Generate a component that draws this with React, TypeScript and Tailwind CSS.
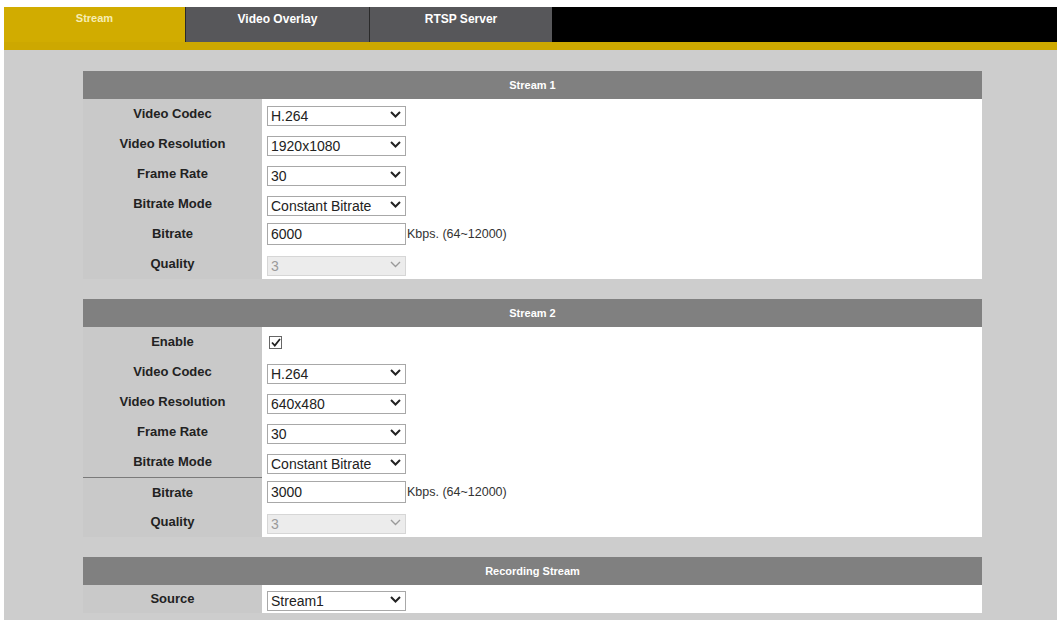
import React from 'react';

const font = { fontFamily: '"Liberation Sans", Arial, sans-serif' };

const Chevron: React.FC<{ muted?: boolean }> = ({ muted }) => (
  <svg
    width="11"
    height="7"
    viewBox="0 0 11 7"
    className="pointer-events-none absolute right-[5px] top-[7px]"
  >
    <polyline
      points="1,1 5.5,5.5 10,1"
      fill="none"
      stroke={muted ? '#9a9a9a' : '#222'}
      strokeWidth={muted ? 1.4 : 2}
    />
  </svg>
);

const Select: React.FC<{ value: string; options: string[]; disabled?: boolean }> = ({
  value,
  options,
  disabled,
}) => (
  <div className="relative w-[139px] h-[20px]">
    <select
      defaultValue={value}
      disabled={disabled}
      className={
        disabled
          ? 'appearance-none w-full h-full border border-[#d6d6d6] bg-[#ececec] text-[#9a9a9a] text-[14px] leading-none pl-[3px] outline-none'
          : 'appearance-none w-full h-full border border-[#a8a8a8] bg-white text-[#222] text-[14px] leading-none pl-[3px] outline-none'
      }
    >
      {options.map((o) => (
        <option key={o}>{o}</option>
      ))}
    </select>
    <Chevron muted={disabled} />
  </div>
);

const Bitrate: React.FC<{ value: string }> = ({ value }) => (
  <div className="flex items-center">
    <input
      defaultValue={value}
      className="w-[139px] h-[22px] border border-[#a8a8a8] bg-white text-[14px] text-[#222] pl-[3px] outline-none"
    />
    <span className="text-[12.5px] text-[#333] ml-[1px]">Kbps. (64~12000)</span>
  </div>
);

const Row: React.FC<{ label: string; h?: string; line?: boolean; children: React.ReactNode }> = ({
  label,
  h = 'h-[30px]',
  line,
  children,
}) => (
  <div className={`flex ${h}`}>
    <div
      className={`w-[179px] shrink-0 bg-[#c9c9c9] flex items-center justify-center text-[13px] font-bold text-[#222] ${
        line ? 'border-t border-[#7a7a7a]' : ''
      }`}
    >
      {label}
    </div>
    <div className="flex-1 bg-white flex items-center pl-[5px]">{children}</div>
  </div>
);

const Header: React.FC<{ title: string }> = ({ title }) => (
  <div className="h-[28px] bg-[#808080] flex items-center justify-center text-white text-[11px] font-bold">
    {title}
  </div>
);

const codecs = ['H.264', 'H.265', 'MJPEG'];
const modes = ['Constant Bitrate', 'Variable Bitrate'];
const rates = ['30', '25', '15', '10', '5'];

export default function App() {
  return (
    <div className="min-h-[628px] bg-white pt-[7px] pl-[4px]" style={font}>
      <div className="w-[1053px] h-[613px] bg-[#cdcdcd]">
        {/* Tabs */}
        <div className="flex h-[35px] bg-black">
          <div className="w-[181px] bg-[#d1ac00] text-[#f6eeb4] text-[11px] font-bold text-center pt-[3px]">
            Stream
          </div>
          <div className="w-[184px] bg-[#57575a] border-l border-[#2a2a2a] text-white text-[12px] font-bold text-center pt-[3px]">
            Video Overlay
          </div>
          <div className="w-[183px] bg-[#57575a] border-l border-[#2a2a2a] text-white text-[12px] font-bold text-center pt-[3px]">
            RTSP Server
          </div>
        </div>
        <div className="h-[8px] bg-[#cda800]" />

        <div className="pt-[21px] pl-[79px] flex flex-col gap-[20px]">
          <div className="w-[899px]">
            <Header title="Stream 1" />
            <Row label="Video Codec">
              <Select value="H.264" options={codecs} />
            </Row>
            <Row label="Video Resolution">
              <Select value="1920x1080" options={['1920x1080', '1280x720', '640x480']} />
            </Row>
            <Row label="Frame Rate">
              <Select value="30" options={rates} />
            </Row>
            <Row label="Bitrate Mode">
              <Select value="Constant Bitrate" options={modes} />
            </Row>
            <Row label="Bitrate">
              <Bitrate value="6000" />
            </Row>
            <Row label="Quality">
              <Select value="3" options={['1', '2', '3', '4', '5']} disabled />
            </Row>
          </div>

          <div className="w-[899px]">
            <Header title="Stream 2" />
            <Row label="Enable">
              <div className="ml-[2px] w-[13px] h-[13px] border border-[#666] bg-white flex items-center justify-center">
                <svg width="10" height="9" viewBox="0 0 10 9">
                  <polyline points="1,4.5 3.8,7.5 9,1" fill="none" stroke="#222" strokeWidth="1.8" />
                </svg>
              </div>
            </Row>
            <Row label="Video Codec">
              <Select value="H.264" options={codecs} />
            </Row>
            <Row label="Video Resolution">
              <Select value="640x480" options={['640x480', '320x240']} />
            </Row>
            <Row label="Frame Rate">
              <Select value="30" options={rates} />
            </Row>
            <Row label="Bitrate Mode">
              <Select value="Constant Bitrate" options={modes} />
            </Row>
            <Row label="Bitrate" line>
              <Bitrate value="3000" />
            </Row>
            <Row label="Quality">
              <Select value="3" options={['1', '2', '3', '4', '5']} disabled />
            </Row>
          </div>

          <div className="w-[899px]">
            <Header title="Recording Stream" />
            <Row label="Source" h="h-[28px]">
              <Select value="Stream1" options={['Stream1', 'Stream2']} />
            </Row>
          </div>
        </div>
      </div>
    </div>
  );
}
